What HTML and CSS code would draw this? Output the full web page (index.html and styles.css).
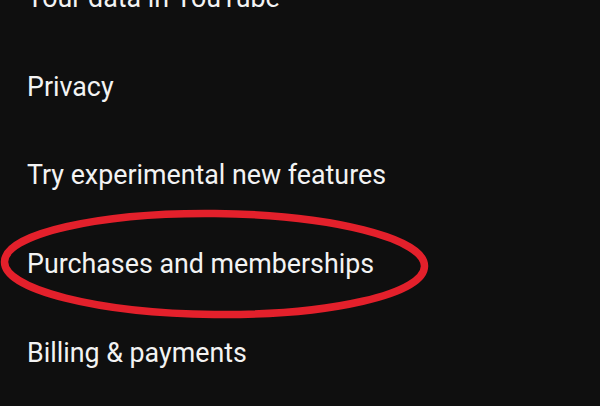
FILE: index.html
```html
<!DOCTYPE html>
<html>
<head>
<meta charset="utf-8">
<link rel="stylesheet" href="styles.css">
</head>
<body>
<div class="screen">
  <ul class="menu">
    <li class="item">Your data in YouTube</li>
    <li class="item">Privacy</li>
    <li class="item">Try experimental new features</li>
    <li class="item">Purchases and memberships</li>
    <li class="item">Billing &amp; payments</li>
  </ul>
  <svg class="mark" width="600" height="406" viewBox="0 0 600 406">
    <ellipse cx="214.5" cy="264" rx="210" ry="50.5" fill="none" stroke="#e3202b" stroke-width="7.5" transform="rotate(0.6 214.5 264)"/>
  </svg>
</div>
</body>
</html>
```
FILE: styles.css
```css
html, body {
  margin: 0;
  padding: 0;
  background: #0f0f0f;
}
.screen {
  position: relative;
  width: 600px;
  height: 406px;
  overflow: hidden;
  background: #0f0f0f;
}
.menu {
  list-style: none;
  margin: -46px 0 0 0;
  padding: 0;
}
.item {
  height: 88.7px;
  line-height: 88.7px;
  padding-left: 27px;
  font-family: Roboto, "Noto Sans", sans-serif;
  font-size: 26.8px;
  color: #f3f3f3;
  white-space: nowrap;
}
.mark {
  position: absolute;
  left: 0;
  top: 0;
  pointer-events: none;
}
```
